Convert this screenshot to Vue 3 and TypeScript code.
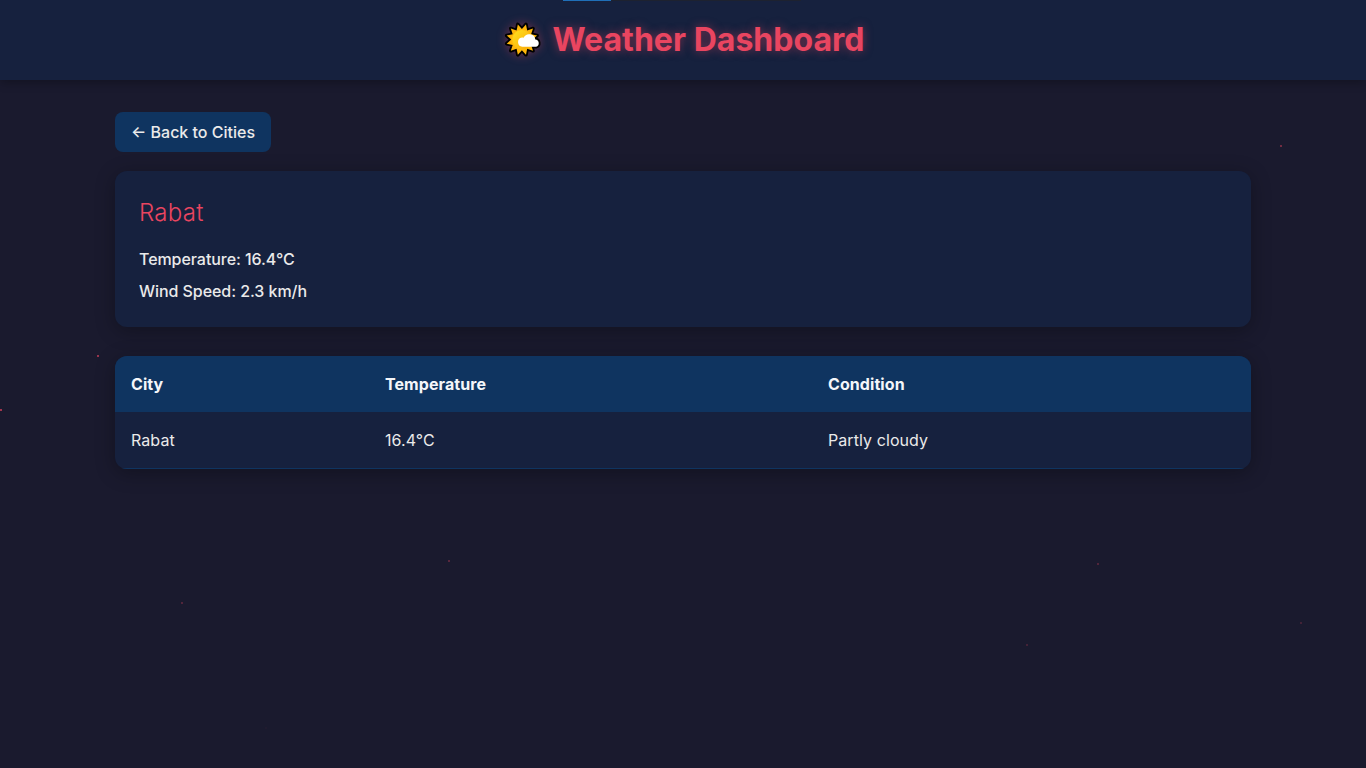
<script setup lang="ts">
interface Reading {
  city: string
  temperature: string
  condition: string
}

interface Particle {
  x: number
  y: number
  opacity: number
}

const wind = '2.3 km/h'
const readings: Reading[] = [
  { city: 'Rabat', temperature: '16.4°C', condition: 'Partly cloudy' },
]

const particles: Particle[] = [
  { x: 1280, y: 145, opacity: 0.42 },
  { x: 97, y: 355, opacity: 0.6 },
  { x: 0, y: 409, opacity: 0.65 },
  { x: 448, y: 560, opacity: 0.3 },
  { x: 1097, y: 563, opacity: 0.27 },
  { x: 181, y: 602, opacity: 0.27 },
  { x: 1300, y: 622, opacity: 0.2 },
  { x: 1026, y: 644, opacity: 0.2 },
  { x: 265, y: 727, opacity: 0.03 },
]

// Twelve-pointed sun: tips and valleys alternate every 15 degrees.
const sunPoints = Array.from({ length: 24 }, (_, i) => {
  const radius = i % 2 === 0 ? 15.7 : 10.6
  const angle = ((i * 15 + 15) * Math.PI) / 180
  return `${(17.9 + radius * Math.sin(angle)).toFixed(2)},${(17.6 - radius * Math.cos(angle)).toFixed(2)}`
}).join(' ')

const cloud = 'M18.3 24.8a4.7 4.7 0 0 1-.4-9.3c.7 0 1.2.1 1.7.3a6.2 6.2 0 0 1 11.7 1.6 3.8 3.8 0 0 1 .8 7.4z'
</script>

<template>
  <div class="page">
    <span
      v-for="(p, i) in particles"
      :key="i"
      class="particle"
      :style="{ left: p.x + 'px', top: p.y + 'px', opacity: p.opacity }"
    ></span>
    <div class="top-strip"><span class="strip-active"></span></div>

    <header class="header">
      <h1 class="title">
        <svg class="sun" viewBox="0 0 36 36" aria-hidden="true">
          <defs>
            <linearGradient id="sunFill" x1="0" y1="0" x2="1" y2="1">
              <stop offset="0" stop-color="#ffe11c" />
              <stop offset="1" stop-color="#f9a80c" />
            </linearGradient>
          </defs>
          <polygon :points="sunPoints" fill="#000" stroke="#000" stroke-width="3.6" stroke-linejoin="round" />
          <path :d="cloud" fill="#000" stroke="#000" stroke-width="3.6" stroke-linejoin="round" />
          <polygon :points="sunPoints" fill="#ffb70b" />
          <circle cx="17.9" cy="17.6" r="9.7" fill="url(#sunFill)" />
          <path :d="cloud" fill="#fff" />
        </svg>
        <span class="title-text">Weather Dashboard</span>
      </h1>
    </header>

    <main class="container">
      <button class="back" type="button">← Back to Cities</button>

      <section class="card">
        <h2 class="city">{{ readings[0].city }}</h2>
        <p class="detail">Temperature: {{ readings[0].temperature }}</p>
        <p class="detail">Wind Speed: {{ wind }}</p>
      </section>

      <table class="table">
        <colgroup><col class="col-city" /><col class="col-temp" /><col /></colgroup>
        <thead>
          <tr><th>City</th><th>Temperature</th><th>Condition</th></tr>
        </thead>
        <tbody>
          <tr v-for="r in readings" :key="r.city">
            <td>{{ r.city }}</td>
            <td>{{ r.temperature }}</td>
            <td>{{ r.condition }}</td>
          </tr>
        </tbody>
      </table>
    </main>
  </div>
</template>

<style>
body {
  margin: 0;
  background: #1a1a2e;
}
</style>

<style scoped>
* {
  box-sizing: border-box;
}

.page {
  position: relative;
  height: 100vh;
  overflow: hidden;
  background: #1a1a2e;
  color: #eaeaea;
  font-family: Inter, "Liberation Sans", sans-serif;
  font-size: 16px;
}

.particle {
  position: absolute;
  width: 2px;
  height: 2px;
  background: #e94560;
}

.top-strip {
  position: absolute;
  top: 0;
  left: 563px;
  z-index: 2;
  display: flex;
  width: 238px;
  height: 1px;
  background: #1d2230;
}

.strip-active {
  width: 48px;
  background: #1f6fb8;
}

.header {
  display: flex;
  align-items: center;
  justify-content: center;
  height: 80px;
  background: #16213e;
  box-shadow: 0 2px 10px rgba(0, 0, 0, 0.3);
}

.title {
  display: flex;
  align-items: center;
  gap: 12px;
  margin: 0;
  padding-left: 3px;
  color: #e94560;
  font-size: 32px;
  font-weight: 700;
  line-height: 40px;
  text-shadow: 0 0 10px rgba(233, 69, 96, 0.5);
}

.title-text {
  letter-spacing: 0.03px;
}

.sun {
  width: 36px;
  height: 36px;
  overflow: visible;
  filter: drop-shadow(0 0 5px rgba(233, 69, 96, 0.4));
}

.container {
  max-width: 1200px;
  margin: 0 auto;
  padding: 32px;
}

.back {
  display: block;
  height: 40px;
  padding: 0 16px;
  border: 0;
  border-radius: 8px;
  background: #0f3460;
  color: #eaeaea;
  font: 500 16px/40px Inter, "Liberation Sans", sans-serif;
}

.card {
  height: 156px;
  margin-top: 19px;
  padding: 24px;
  border-radius: 12px;
  background: #16213e;
  box-shadow: 0 4px 20px rgba(0, 0, 0, 0.3);
}

.city {
  margin: 0 0 16px;
  color: #e94560;
  font-size: 24px;
  font-weight: 350;
  line-height: 36px;
  letter-spacing: 0.3px;
}

.detail {
  margin: 0 0 8px;
  font-weight: 460;
  line-height: 24px;
  letter-spacing: -0.06px;
}

.table {
  width: 100%;
  margin-top: 29px;
  overflow: hidden;
  border-collapse: separate;
  border-spacing: 0;
  border-radius: 12px;
  background: #16213e;
  box-shadow: 0 4px 20px rgba(0, 0, 0, 0.3);
  table-layout: fixed;
}

.col-city {
  width: 254px;
}

.col-temp {
  width: 443px;
}

th,
td {
  padding: 16px;
  line-height: 24px;
  text-align: left;
  letter-spacing: 0.08px;
}

th {
  background: #0f3460;
  color: #f4f6fa;
  font-weight: 700;
}

td {
  border-bottom: 1px solid #0f3460;
  font-weight: 420;
}
</style>
